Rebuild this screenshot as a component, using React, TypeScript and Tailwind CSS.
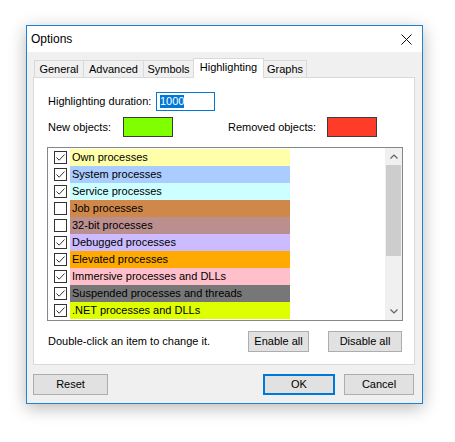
import React from 'react';

const rows = [
  { label: 'Own processes', color: '#ffffaa', checked: true },
  { label: 'System processes', color: '#aaccff', checked: true },
  { label: 'Service processes', color: '#ccffff', checked: true },
  { label: 'Job processes', color: '#d0884a', checked: false },
  { label: '32-bit processes', color: '#bc8f8f', checked: false },
  { label: 'Debugged processes', color: '#ccbbff', checked: true },
  { label: 'Elevated processes', color: '#ffaa00', checked: true },
  { label: 'Immersive processes and DLLs', color: '#ffc0cb', checked: true },
  { label: 'Suspended processes and threads', color: '#777777', checked: true },
  { label: '.NET processes and DLLs', color: '#deff00', checked: true },
];

const tabs = [
  { label: 'General', w: 'w-[50px]' },
  { label: 'Advanced', w: 'w-[61px]' },
  { label: 'Symbols', w: 'w-[51px]' },
  { label: 'Highlighting', w: 'w-[71px]', active: true },
  { label: 'Graphs', w: 'w-[44px]' },
];

function CheckBox({ checked }: { checked: boolean }) {
  return (
    <div className="flex h-[13px] w-[13px] shrink-0 items-center justify-center border border-[#333333] bg-white">
      {checked && (
        <svg width="11" height="11" viewBox="0 0 11 11">
          <path d="M1.5 5.5 L4.2 8.2 L9.5 2.5" fill="none" stroke="#333333" strokeWidth="1" />
        </svg>
      )}
    </div>
  );
}

function WinButton({ label, w, primary }: { label: string; w: string; primary?: boolean }) {
  return (
    <div
      className={`flex h-[21px] ${w} items-center justify-center bg-[#e1e1e1] text-[11px] ${
        primary ? 'border-2 border-[#0078d7]' : 'border border-[#adadad]'
      }`}
    >
      {label}
    </div>
  );
}

export default function App() {
  return (
    <div
      className="h-[442px] w-[455px] bg-white pl-[26px] pt-[25px] text-black"
      style={{ fontFamily: '"Liberation Sans", Arial, sans-serif' }}
    >
      <div className="flex h-[379px] w-[397px] flex-col border border-[#1883d7] bg-[#f0f0f0] shadow-[0_4px_16px_rgba(0,0,0,0.28)]">
        {/* Title bar */}
        <div className="flex h-[26px] items-center justify-between bg-white pl-[4px] pr-[10px]">
          <span className="text-[12px]">Options</span>
          <svg width="11" height="11" viewBox="0 0 11 11">
            <path d="M0.5 0.5 L10.5 10.5 M10.5 0.5 L0.5 10.5" stroke="#111" strokeWidth="1" />
          </svg>
        </div>

        <div className="px-[6px] pt-[6px]">
          {/* Tabs */}
          <div className="flex h-[19px] items-end pl-[1px]">
            {tabs.map((t, i) => (
              <div
                key={t.label}
                className={`${t.w} ${i > 0 ? '-ml-px' : ''} flex items-center justify-center border border-[#d9d9d9] text-[11px] ${
                  t.active
                    ? 'relative z-10 -mb-px h-[20px] border-b-0 bg-white pb-[2px]'
                    : 'h-[17px] border-b-0 bg-[#f0f0f0]'
                }`}
              >
                {t.label}
              </div>
            ))}
          </div>

          {/* Panel */}
          <div className="h-[288px] w-[382px] border border-[#d9d9d9] bg-white pl-[13px] text-[11px]">
            <div className="mt-[14px] flex h-[19px] items-center">
              <span className="ml-[1px] w-[108px]">Highlighting duration:</span>
              <div className="flex h-[19px] w-[59px] items-center border border-[#0078d7] bg-white pl-[3px]">
                <span className="bg-[#0078d7] leading-[13px] text-white">1000</span>
              </div>
            </div>

            <div className="mt-[6px] flex h-[20px] items-center">
              <span className="ml-[1px] w-[75px]">New objects:</span>
              <div className="h-[20px] w-[50px] border border-[#3c3c3c] bg-[#80ff00]" />
              <span className="ml-[55px] w-[99px]">Removed objects:</span>
              <div className="h-[20px] w-[50px] border border-[#3c3c3c] bg-[#ff3c28]" />
            </div>

            {/* List */}
            <div className="mt-[10px] flex h-[174px] w-[356px] border border-[#828790] bg-white">
              <div className="flex-1 pt-px">
                {rows.map((r) => (
                  <div key={r.label} className="flex h-[17px] items-center pl-[6px]">
                    <CheckBox checked={r.checked} />
                    <div
                      className="ml-[3px] flex h-[17px] w-[220px] items-center pl-[2px]"
                      style={{ backgroundColor: r.color }}
                    >
                      {r.label}
                    </div>
                  </div>
                ))}
              </div>
              <div className="flex w-[17px] flex-col bg-[#f0f0f0]">
                <div className="flex h-[17px] items-center justify-center">
                  <svg width="8" height="5" viewBox="0 0 8 5">
                    <path d="M0.5 4.5 L4 1 L7.5 4.5" fill="none" stroke="#606060" strokeWidth="1.2" />
                  </svg>
                </div>
                <div className="mx-[1px] h-[91px] bg-[#cdcdcd]" />
                <div className="flex-1" />
                <div className="flex h-[17px] items-center justify-center">
                  <svg width="8" height="5" viewBox="0 0 8 5">
                    <path d="M0.5 0.5 L4 4 L7.5 0.5" fill="none" stroke="#606060" strokeWidth="1.2" />
                  </svg>
                </div>
              </div>
            </div>

            <div className="mt-[10px] flex h-[21px] w-[355px] items-center">
              <span className="ml-[1px] flex-1">Double-click an item to change it.</span>
              <WinButton label="Enable all" w="w-[61px]" />
              <div className="w-[19px]" />
              <WinButton label="Disable all" w="w-[74px]" />
            </div>
          </div>

          {/* Bottom buttons */}
          <div className="mt-[9px] flex items-center pr-[2px]">
            <WinButton label="Reset" w="w-[75px]" />
            <div className="flex-1" />
            <WinButton label="OK" w="w-[72px]" primary />
            <div className="w-[9px]" />
            <WinButton label="Cancel" w="w-[70px]" />
          </div>
        </div>
      </div>
    </div>
  );
}
